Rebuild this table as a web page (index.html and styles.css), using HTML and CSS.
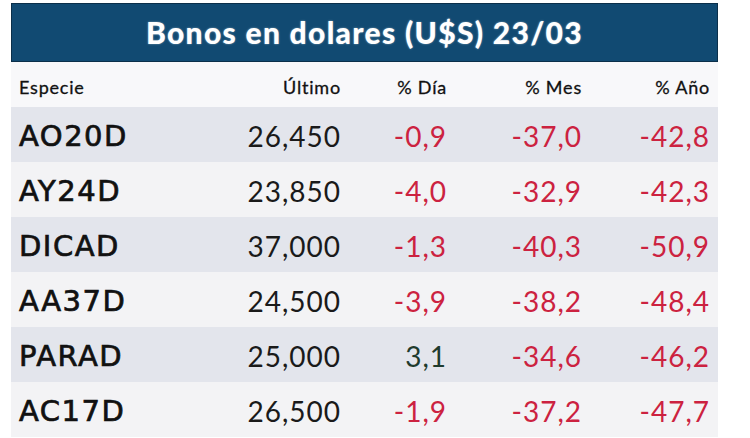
FILE: index.html
```html
<!DOCTYPE html>
<html lang="es">
<head>
    <meta charset="UTF-8">
    <meta name="viewport" content="width=device-width, initial-scale=1.0">
    <title>Bonos en dolares</title>
    <link rel="stylesheet" href="styles.css">
</head>
<body>
    <div class="bonos">
        <h1 class="bonos-title">Bonos en dolares (U$S) 23/03</h1>
        <div class="bonos-table">
            <div class="row row-head">
                <span class="cell name">Especie</span>
                <span class="cell">Último</span>
                <span class="cell">% Día</span>
                <span class="cell">% Mes</span>
                <span class="cell">% Año</span>
            </div>
            <div class="row row-dark">
                <span class="cell name">AO20D</span>
                <span class="cell">26,450</span>
                <span class="cell neg">-0,9</span>
                <span class="cell neg">-37,0</span>
                <span class="cell neg">-42,8</span>
            </div>
            <div class="row row-light">
                <span class="cell name">AY24D</span>
                <span class="cell">23,850</span>
                <span class="cell neg">-4,0</span>
                <span class="cell neg">-32,9</span>
                <span class="cell neg">-42,3</span>
            </div>
            <div class="row row-dark">
                <span class="cell name">DICAD</span>
                <span class="cell">37,000</span>
                <span class="cell neg">-1,3</span>
                <span class="cell neg">-40,3</span>
                <span class="cell neg">-50,9</span>
            </div>
            <div class="row row-light">
                <span class="cell name">AA37D</span>
                <span class="cell">24,500</span>
                <span class="cell neg">-3,9</span>
                <span class="cell neg">-38,2</span>
                <span class="cell neg">-48,4</span>
            </div>
            <div class="row row-dark">
                <span class="cell name">PARAD</span>
                <span class="cell">25,000</span>
                <span class="cell pos">3,1</span>
                <span class="cell neg">-34,6</span>
                <span class="cell neg">-46,2</span>
            </div>
            <div class="row row-light">
                <span class="cell name">AC17D</span>
                <span class="cell">26,500</span>
                <span class="cell neg">-1,9</span>
                <span class="cell neg">-37,2</span>
                <span class="cell neg">-47,7</span>
            </div>
        </div>
    </div>
</body>
</html>
```
FILE: styles.css
```css
body, html {
    margin: 0;
    padding: 0;
    background: #fff;
    font-family: 'Lato', 'Liberation Sans', sans-serif;
}

.bonos {
    width: 707px;
    margin: 3px 0 0 11px;
}

.bonos-title {
    margin: 0;
    height: 57px;
    background: #114a72;
    border: 1px solid #0b2f4a;
    color: #fff;
    font-size: 30px;
    font-weight: 900;
    letter-spacing: 1.3px;
    text-align: center;
    line-height: 57px;
    text-shadow: 0 0 2px rgba(255, 255, 255, 0.5);
}

.row {
    display: grid;
    grid-template-columns: 170px 160px 106px 135px 128px;
    padding-right: 8px;
    align-items: center;
    height: 55px;
}

.row-head {
    height: 45px;
    background: #f8f8fa;
    padding-top: 4px;
    box-sizing: border-box;
}

.row-dark {
    background: #e3e5ec;
}

.row-light {
    background: #f3f3f5;
}

.cell {
    text-align: right;
    font-size: 28px;
    color: #1a1a1a;
    letter-spacing: 1px;
    padding-top: 2px;
}

.cell.name {
    text-align: left;
    padding-left: 8px;
    font-family: 'DejaVu Sans', sans-serif;
    font-weight: normal;
    font-size: 29px;
    letter-spacing: 1.5px;
    -webkit-text-stroke: 0.7px #111;
    color: #111;
}

.row-head .cell {
    font-family: 'Lato', sans-serif;
    font-size: 18px;
    font-weight: normal;
    letter-spacing: 0.8px;
    -webkit-text-stroke: 0.3px #111;
    color: #111;
    padding-top: 0;
}

.neg {
    color: #cc2240;
}

.pos {
    color: #1f3b2e;
}
```
